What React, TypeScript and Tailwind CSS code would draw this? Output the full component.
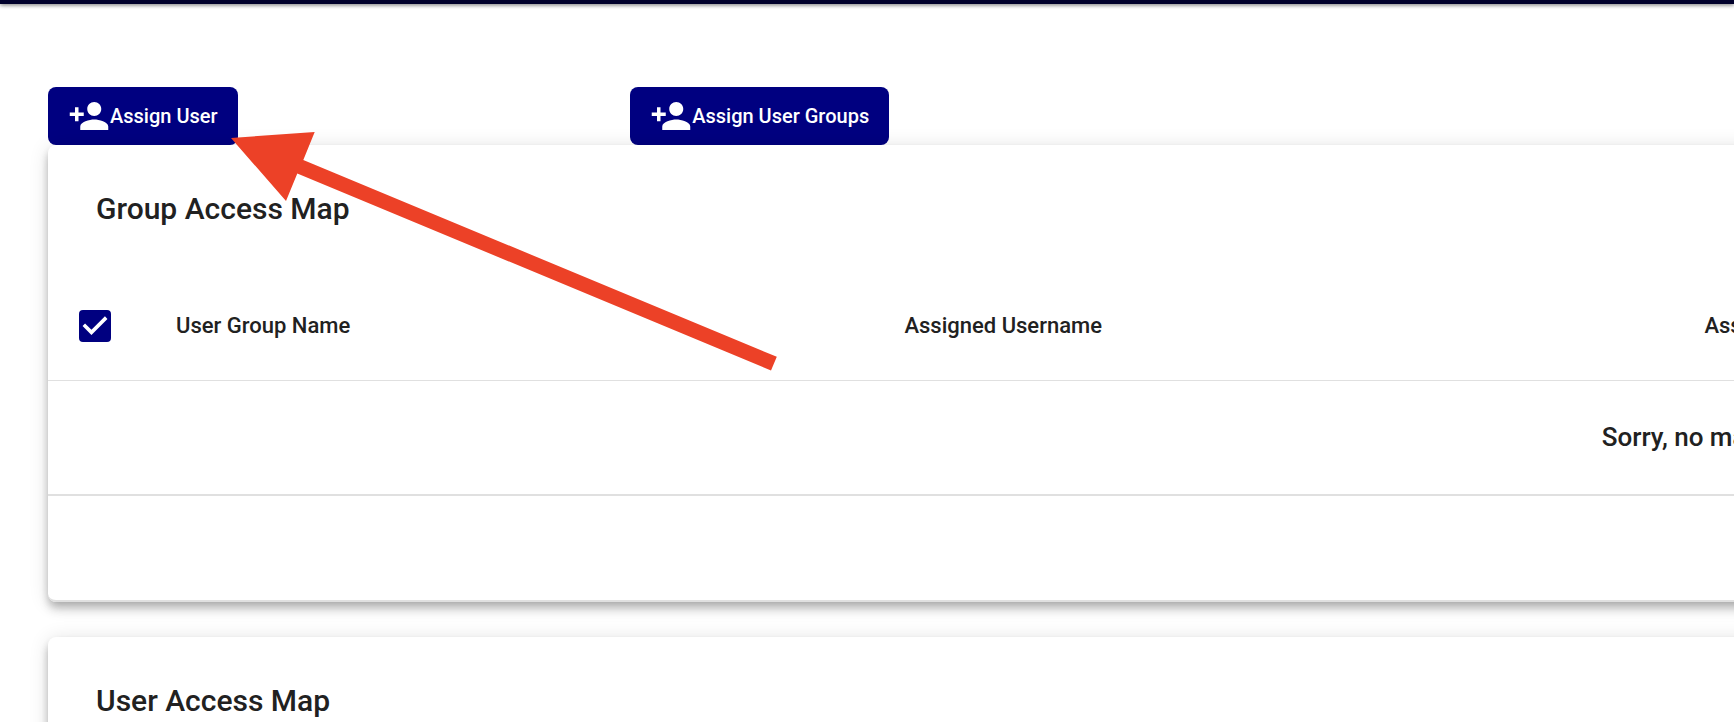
import { useState } from "react";

function PersonAddIcon() {
  return (
    <svg viewBox="0 0 24 24" className="size-[42px] shrink-0 fill-current" aria-hidden="true">
      <path d="M15 12c2.21 0 4-1.79 4-4s-1.79-4-4-4-4 1.79-4 4 1.79 4 4 4zm-9-2V7H4v3H1v2h3v3h2v-3h3v-2H6zm9 4c-2.67 0-8 1.34-8 4v2h16v-2c0-2.66-5.33-4-8-4z" />
    </svg>
  );
}

function ActionButton({ label }: { label: string }) {
  return (
    <button
      type="button"
      className="flex h-[58px] items-center rounded-lg bg-[#000080] px-5 text-[20px] leading-6 font-medium whitespace-nowrap text-white"
    >
      <PersonAddIcon />
      {label}
    </button>
  );
}

function SelectAll() {
  const [checked, setChecked] = useState(true);
  return (
    <label className="relative ml-[31px] block size-8">
      <input
        type="checkbox"
        aria-label="Select all"
        checked={checked}
        onChange={(e) => setChecked(e.target.checked)}
        className="peer block size-8 appearance-none rounded border-2 border-[#000080] checked:bg-[#000080]"
      />
      <svg
        viewBox="3 3 18 18"
        className="pointer-events-none absolute inset-0 hidden size-8 fill-white peer-checked:block"
        aria-hidden="true"
      >
        <path d="M10 17l-5-5 1.41-1.41L10 14.17l7.59-7.59L19 8l-9 9z" />
      </svg>
    </label>
  );
}

function AccessCard({ title }: { title: string }) {
  return (
    <section className="rounded-lg bg-white shadow-[0_4px_8px_-2px_rgba(0,0,0,0.2),0_8px_10px_0_rgba(0,0,0,0.14),0_2px_20px_0_rgba(0,0,0,0.12)]">
      <h2 className="flex h-32 items-center px-12 text-[30px] leading-10 font-medium">{title}</h2>
      <table className="w-full table-fixed border-collapse text-left">
        <colgroup>
          <col className="w-[2.75%]" />
          <col className="w-[20.85%]" />
          <col className="w-[22.9%]" />
          <col />
        </colgroup>
        <thead>
          <tr className="h-[107px] border-b border-[#e0e0e0] text-[22px] leading-7">
            <th className="p-0">
              <SelectAll />
            </th>
            <th className="px-8 font-medium">User Group Name</th>
            <th className="px-8 font-medium">Assigned Username</th>
            <th className="px-8 font-medium">Assigned Role</th>
          </tr>
        </thead>
        <tbody>
          <tr className="h-[115px] border-b-2 border-[#e0e0e0] text-[26px] leading-8">
            <td colSpan={4} className="text-center font-medium">
              Sorry, no matching records found
            </td>
          </tr>
        </tbody>
      </table>
      <div className="h-[106px] rounded-b-lg border-b-2 border-[#e0e0e0]" />
    </section>
  );
}

function PointerArrow() {
  return (
    <svg
      viewBox="231 132 546 239"
      className="pointer-events-none absolute top-[132px] left-[231px] h-[239px] w-[546px] fill-[#ec4127]"
      aria-hidden="true"
    >
      <path d="M231 138L314.7 132L303.3 160L776.8 356.8L771 370.5L297.3 173.5L286 201Z" />
    </svg>
  );
}

export default function App() {
  return (
    <div className="relative h-screen overflow-hidden bg-white font-['Roboto','Noto_Sans',sans-serif] text-[#212121]">
      <header className="h-1 bg-[#00002b] shadow-[0_1px_4px_rgba(0,0,0,0.6)]" />
      <main className="w-[207vw] px-12 pt-[83px]">
        <div className="grid grid-cols-6">
          <div className="flex">
            <ActionButton label="Assign User" />
          </div>
          <div className="flex">
            <ActionButton label="Assign User Groups" />
          </div>
        </div>
        <div className="flex flex-col gap-[35px]">
          <AccessCard title="Group Access Map" />
          <AccessCard title="User Access Map" />
        </div>
      </main>
      <PointerArrow />
    </div>
  );
}
